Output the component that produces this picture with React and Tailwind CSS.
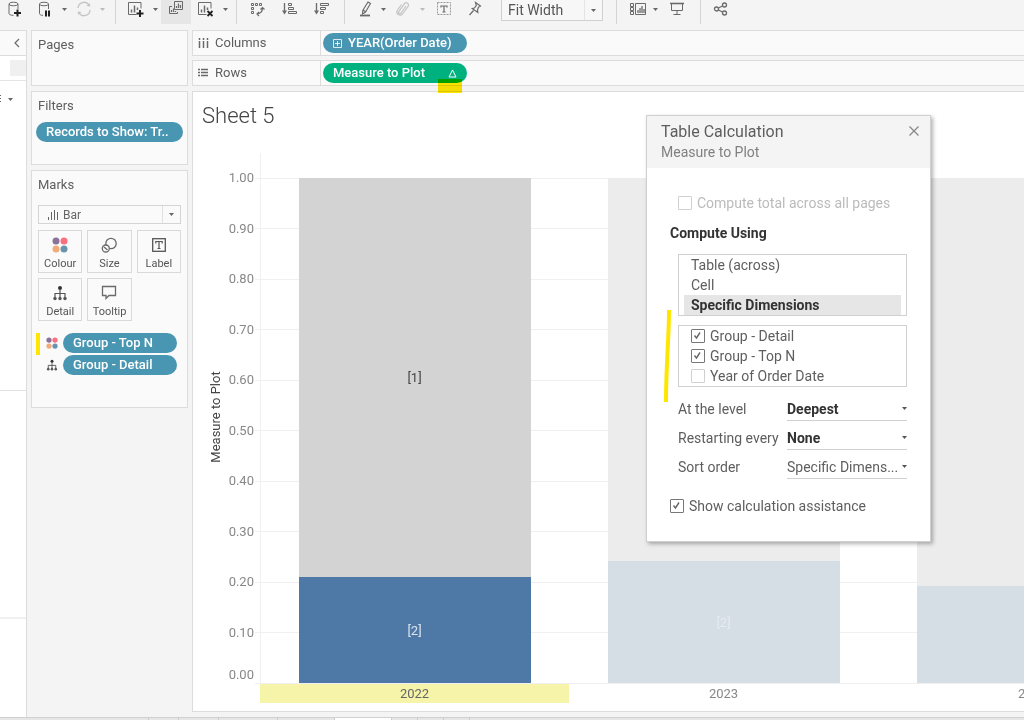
import { useState } from 'react'

const years = [
  { year: '2022', top: 0.21, faded: false },
  { year: '2023', top: 0.242, faded: true },
  { year: '2024', top: 0.192, faded: true, hideLabel: true }
]

const ticks = [0, 1, 2, 3, 4, 5, 6, 7, 8, 9, 10]

// chart geometry
const PLOT_TOP = 86
const PLOT_BOTTOM = 591
const PLOT_LEFT = 66
const COL_WIDTH = 309
const BAR_WIDTH = 232

const Icon = ({ children, width = 18, height = 18, className = 'text-[#6a6a6a]' }) => (
  <svg width={width} height={height} viewBox={`0 0 ${width} ${height}`} fill="none" stroke="currentColor" className={`shrink-0 ${className}`} aria-hidden="true">
    {children}
  </svg>
)

const Caret = ({ className = 'text-[#666]' }) => (
  <svg width="5" height="3" viewBox="0 0 5 3" className={`shrink-0 ${className}`} aria-hidden="true">
    <path d="M0 0h5L2.5 3z" fill="currentColor" />
  </svg>
)

const NewSourceIcon = () => (
  <Icon>
    <ellipse cx="7.500" cy="4" rx="4.500" ry="1.800" />
    <path d="M3 4v9.500c0 1 1.500 1.800 4.500 1.900M12 4v5" />
    <path d="M11.500 9.500v7M8 13h7" stroke="#222" strokeWidth="2" />
  </Icon>
)

const PauseSourceIcon = () => (
  <Icon>
    <ellipse cx="8" cy="4" rx="4.500" ry="1.800" />
    <path d="M3.500 4v9.500c0 1 1 1.700 3.500 1.900M12.500 4v5" />
    <path d="M10 10.500v6M13 10.500v6" stroke="#222" strokeWidth="2" />
  </Icon>
)

const RefreshIcon = () => (
  <Icon className="text-[#c4c4c4]">
    <path d="M3 8a6 6 0 0 1 11-3M15 10a6 6 0 0 1-11 3" strokeWidth="1.300" />
    <path d="M15.500 6.500l-4-.5 3-3zM2.500 11.500l4 .5-3 3z" fill="currentColor" stroke="none" />
  </Icon>
)

const NewSheetIcon = () => (
  <Icon>
    <path d="M9.500 14.500H1.500v-12h12.500v6" />
    <path d="M4.500 12.500V9.500M7.500 12.500V5.500M10.500 10V7.500" strokeWidth="1.500" />
    <path d="M13 10v7M9.500 13.500h7" stroke="#222" strokeWidth="2" />
  </Icon>
)

const DuplicateIcon = () => (
  <Icon>
    <path d="M7.500 1.500h8v8h-8zM5 6.500H2.500v7h8V12" />
    <path d="M9.500 8V6M11.500 8V3.500M13.500 8V5M4.500 12v-2M6.500 12V8.500M8.500 12v-1" strokeWidth="1.200" />
  </Icon>
)

const ClearIcon = () => (
  <Icon>
    <path d="M9.500 14.500H1.500v-12h12.500v6" />
    <path d="M4.500 12.500V9.500M7.500 12.500V5.500M10.500 10V7.500" strokeWidth="1.500" />
    <path d="M10.500 11l5 5M15.500 11l-5 5" stroke="#222" strokeWidth="1.800" />
  </Icon>
)

const SwapIcon = () => (
  <Icon>
    <path d="M2.500 3.500h2v2h-2zM6.500 3.500h2v2h-2zM10.500 3.500h2v2h-2zM2.500 7.500h2v2h-2zM2.500 11.500h2v2h-2z" />
    <path d="M13.500 8c0 4-2 5.500-5.500 6M11.500 9.500l2-2 2 2M10 12l-2 2 2 2" strokeWidth="1.200" />
  </Icon>
)

const SortAscIcon = () => (
  <Icon>
    <path d="M3.500 3v9" strokeWidth="1.300" />
    <path d="M1 10.500h5l-2.500 4z" fill="currentColor" stroke="none" />
    <path d="M7.500 3.500h3v2h-3zM7.500 7.500h5v2h-5zM7.500 11.500h8v2h-8z" />
  </Icon>
)

const SortDescIcon = () => (
  <Icon>
    <path d="M3.500 3v9" strokeWidth="1.300" />
    <path d="M1 10.500h5l-2.500 4z" fill="currentColor" stroke="none" />
    <path d="M7.500 3.500h8v2h-8zM7.500 7.500h5v2h-5zM7.500 11.500h3v2h-3z" />
  </Icon>
)

const HighlightIcon = () => (
  <Icon>
    <path d="M12 2l2.500 1.500-5 8.500-3 2 .3-3.500zM7 10l2.500 1.700" strokeWidth="1.100" />
    <path d="M4 15.500h10" strokeWidth="1.800" />
  </Icon>
)

const ClipIcon = () => (
  <Icon className="text-[#c4c4c4]">
    <path d="M12 6l-5 7a1.300 1.300 0 0 1-2.200-1.400l5.500-7.800a2.300 2.300 0 0 1 3.800 2.600L8.500 14a3.200 3.200 0 0 1-5.300-3.500L7.500 4.500" strokeWidth="1.200" />
  </Icon>
)

const LabelsIcon = () => (
  <Icon>
    <rect x="2.500" y="2.500" width="13" height="12" strokeDasharray="2 1" stroke="#999" />
    <path d="M6 7.500V6h6v1.500M9 6v6M7.500 12h3" strokeWidth="1.200" />
  </Icon>
)

const PinIcon = () => (
  <Icon>
    <path d="M9.500 2.500l5 3.500-1 .8-1 .2-1 3 .3 2.500-5.500-4 2-.5 2-2.500zM7.500 10.500l-4 4.500" strokeWidth="1.200" />
  </Icon>
)

const CardsIcon = () => (
  <Icon>
    <path d="M1.500 3.500h3v3h-3zM1.500 7.500h3v3h-3zM1.500 11.500h3v3h-3zM6.500 3.500h10v11h-10z" />
    <path d="M9 13v-3M11 13V8M13 13V6M15 13V9" strokeWidth="1.300" />
  </Icon>
)

const PresentIcon = () => (
  <Icon>
    <path d="M2 3.500h14" strokeWidth="1.600" />
    <path d="M3.500 4v6.500h11V4M9 10.500v4M5.500 14.500h7" />
  </Icon>
)

const ShareIcon = () => (
  <Icon>
    <circle cx="4.500" cy="9" r="2" strokeWidth="1.300" />
    <circle cx="12.500" cy="5" r="2" strokeWidth="1.300" />
    <circle cx="12.500" cy="13" r="2" strokeWidth="1.300" />
    <path d="M6.500 8l4-2M6.500 10l4 2" strokeWidth="1.200" />
  </Icon>
)

const DotsIcon = ({ size = 16 }) => (
  <svg width={size} height={size} viewBox="0 0 16 16" className="shrink-0" aria-hidden="true">
    <circle cx="4" cy="4" r="3.500" fill="#8a7299" />
    <circle cx="12" cy="4" r="3.500" fill="#fb7080" />
    <circle cx="4" cy="12" r="3.500" fill="#f1ab78" />
    <circle cx="12" cy="12" r="3.500" fill="#6a93ad" />
  </svg>
)

const DetailIcon = ({ size = 16 }) => (
  <svg width={size} height={size} viewBox="0 0 16 16" fill="none" stroke="#555" strokeWidth="1.200" className="shrink-0" aria-hidden="true">
    <circle cx="8" cy="3" r="2" fill="#333" stroke="none" />
    <path d="M8 4v8M3 12V8.500h10V12" />
    <circle cx="3" cy="13.500" r="1.700" fill="#555" stroke="none" />
    <circle cx="8" cy="13.500" r="1.700" fill="#555" stroke="none" />
    <circle cx="13" cy="13.500" r="1.700" fill="#555" stroke="none" />
  </svg>
)

const SizeIcon = () => (
  <Icon width={16} height={16}>
    <circle cx="10" cy="6.500" r="5.200" strokeWidth="1.300" />
    <circle cx="4.800" cy="11.500" r="3.500" fill="#fafafa" strokeWidth="1.300" />
    <path d="M3 10l3.500 3" strokeWidth="1.300" />
  </Icon>
)

const TextIcon = () => (
  <Icon width={16} height={16} className="text-[#555]">
    <rect x="1.700" y="1.700" width="12.600" height="12.600" strokeWidth="1.300" />
    <path d="M4.800 6.500v-2h6.400v2M8 4.500v7M6.500 11.500h3" strokeWidth="1.200" />
  </Icon>
)

const TooltipIcon = () => (
  <Icon width={16} height={16}>
    <path d="M1.500 1.500h13v9H8l-3 3v-3H1.500z" strokeWidth="1.300" />
  </Icon>
)

const toolbarItems = [
  { label: 'New data source', icon: NewSourceIcon, cell: 'w-[30px]' },
  { label: 'Pause auto updates', icon: PauseSourceIcon, cell: 'w-[29px]' },
  { label: 'Update options', caret: true, cell: 'w-[11px]' },
  { label: 'Run update', icon: RefreshIcon, cell: 'w-[27px]' },
  { label: 'Run options', caret: true, muted: true, cell: 'w-[11px]' },
  { divider: true, cell: 'w-[14px]' },
  { label: 'New worksheet', icon: NewSheetIcon, cell: 'w-[28px]' },
  { label: 'New options', caret: true, cell: 'w-[11px]' },
  { label: 'Duplicate', icon: DuplicateIcon, active: true, cell: 'w-[30px]' },
  { label: 'Clear sheet', icon: ClearIcon, cell: 'w-[29px]' },
  { label: 'Clear options', caret: true, cell: 'w-[10px]' },
  { divider: true, cell: 'w-[13px]' },
  { label: 'Swap rows and columns', icon: SwapIcon, cell: 'w-[30px]' },
  { label: 'Sort ascending', icon: SortAscIcon, cell: 'w-[34px]' },
  { label: 'Sort descending', icon: SortDescIcon, cell: 'w-[30px]' },
  { divider: true, cell: 'w-[14px]' },
  { label: 'Highlight', icon: HighlightIcon, cell: 'w-[27px]' },
  { label: 'Highlight options', caret: true, cell: 'w-[10px]' },
  { label: 'Group members', icon: ClipIcon, cell: 'w-[29px]' },
  { label: 'Group options', caret: true, muted: true, cell: 'w-[10px]' },
  { label: 'Show mark labels', icon: LabelsIcon, cell: 'w-[34px]' },
  { label: 'Fix axes', icon: PinIcon, cell: 'w-[28px]' }
]

const toolbarEnd = [
  { divider: true, cell: 'w-[27px]' },
  { label: 'Show cards', icon: CardsIcon, cell: 'w-[16px]' },
  { label: 'Card options', caret: true, cell: 'w-[18px]' },
  { label: 'Presentation mode', icon: PresentIcon, cell: 'w-[26px]' },
  { divider: true, cell: 'w-[20px]' },
  { label: 'Share', icon: ShareIcon, cell: 'w-[22px]' }
]

const ToolbarItem = ({ item }) => {
  if (item.divider) {
    return (
      <div className={`flex h-6 shrink-0 justify-center ${item.cell}`}>
        <div className="h-6 w-px bg-[#d4d4d4]" />
      </div>
    )
  }

  const ItemIcon = item.icon
  return (
    <button aria-label={item.label} className={`flex h-6 shrink-0 justify-center ${item.cell} ${item.active ? 'bg-[#e6e6e6]' : ''} ${item.caret ? 'items-center pb-1.5' : 'items-start'}`}>
      {item.caret ? <Caret className={item.muted ? 'text-[#bbb]' : 'text-[#666]'} /> : <ItemIcon />}
    </button>
  )
}

const Toolbar = () => (
  <header className="flex h-[30px] shrink-0 items-start">
    {toolbarItems.map((item, index) => <ToolbarItem key={index} item={item} />)}
    <div className="ml-3 flex h-[21px] w-[102px] shrink-0 items-center border border-t-0 border-[#d0d0d0] bg-[#f7f7f7]">
      <select aria-label="Fit" className="h-full w-full appearance-none pl-1.5 text-[14px] leading-5 text-[#555] outline-none">
        <option>Fit Width</option>
        <option>Standard</option>
        <option>Entire View</option>
      </select>
      <div className="pointer-events-none -ml-[18px] flex h-full w-[18px] shrink-0 items-center justify-center border-l border-[#e4e4e4]">
        <Caret />
      </div>
    </div>
    {toolbarEnd.map((item, index) => <ToolbarItem key={index} item={item} />)}
  </header>
)

const Pill = ({ children, className = '' }) => (
  <button className={`flex h-5 items-center rounded-full px-[10px] text-left text-[13px] font-medium leading-5 whitespace-nowrap text-white ${className}`}>
    {children}
  </button>
)

const Card = ({ title, className = '', children }) => (
  <section className={`border border-[#dcdcdc] bg-[#fafafa] px-1.5 ${className}`}>
    <h2 className="pt-[5px] text-[13px] leading-[18px] text-[#5e5e5e]">{title}</h2>
    {children}
  </section>
)

const markButtons = [
  { label: 'Colour', icon: DotsIcon },
  { label: 'Size', icon: SizeIcon },
  { label: 'Label', icon: TextIcon },
  { label: 'Detail', icon: DetailIcon },
  { label: 'Tooltip', icon: TooltipIcon }
]

const SideCards = () => (
  <aside className="flex w-[157px] shrink-0 flex-col gap-[5px]">
    <Card title="Pages" className="h-14" />
    <Card title="Filters" className="h-[74px]">
      <Pill className="mt-[7px] -ml-0.5 w-[147px] bg-[#4996b2]">Records to Show: Tr..</Pill>
    </Card>
    <Card title="Marks" className="h-[238px]">
      <div className="mt-[11px] flex h-[19px] items-center border border-[#d4d4d4] bg-[#fafafa]">
        <Icon width={12} height={12} className="ml-2 text-[#666]">
          <path d="M1.500 11V8M4.500 11V3M7.500 11V1M10.500 11V3" />
        </Icon>
        <select aria-label="Mark type" className="h-full min-w-0 flex-1 appearance-none pl-1 text-xs leading-4 text-[#666] outline-none">
          <option>Bar</option>
          <option>Line</option>
          <option>Area</option>
        </select>
        <div className="pointer-events-none -ml-[18px] flex h-full w-[18px] items-center justify-center border-l border-[#e0e0e0]">
          <Caret />
        </div>
      </div>
      <div className="mt-[6px] grid grid-cols-3 gap-[5px]">
        {markButtons.map(({ label, icon: MarkIcon }) => (
          <button key={label} className="flex h-[43px] flex-col items-center border border-[#d9d9d9] bg-[#fafafa] pt-[6px] text-[11px] leading-4 text-[#555]">
            <MarkIcon />
            <span className="pt-[3px]">{label}</span>
          </button>
        ))}
      </div>
      <div className="relative mt-3 flex flex-col gap-0.5">
        <div className="absolute top-0 -left-0.5 h-[22px] w-1 bg-[#ffe600]" />
        <div className="flex items-center pr-1 pl-2">
          <DotsIcon size={12} />
          <Pill className="ml-[5px] flex-1 bg-[#4996b2]">Group - Top N</Pill>
        </div>
        <div className="flex items-center pr-1 pl-2">
          <DetailIcon size={12} />
          <Pill className="ml-[5px] flex-1 bg-[#4996b2]">Group - Detail</Pill>
        </div>
      </div>
    </Card>
  </aside>
)

const ShelfRow = ({ label, icon, children }) => (
  <div className="flex h-[26px] items-center border border-r-0 border-[#dcdcdc] bg-[#fafafa]">
    <div className="flex h-full w-32 shrink-0 items-center gap-1.5 border-r border-[#dcdcdc] pl-1 text-[13px] leading-5 text-[#5e5e5e]">
      {icon}
      {label}
    </div>
    <div className="relative flex pl-0.5">{children}</div>
  </div>
)

const Chart = () => {
  const scale = value => PLOT_BOTTOM - value * (PLOT_BOTTOM - PLOT_TOP)
  const right = PLOT_LEFT + COL_WIDTH * 3

  return (
    <svg width={right} height="619" className="block shrink-0" role="img" aria-label="Measure to Plot by year">
      {ticks.map(tick => (
        <g key={tick}>
          <line x1={PLOT_LEFT - 4} x2={right} y1={scale(tick / 10)} y2={scale(tick / 10)} stroke="#f0f0f0" shapeRendering="crispEdges" />
          <text x={PLOT_LEFT - 5} y={scale(tick / 10) + (tick === 0 ? -4 : 4)} textAnchor="end" fontSize="13" fill="#888">
            {(tick / 10).toFixed(2)}
          </text>
        </g>
      ))}
      <line x1={PLOT_LEFT + 1} x2={PLOT_LEFT + 1} y1="61" y2={PLOT_BOTTOM} stroke="#f0f0f0" shapeRendering="crispEdges" />
      <text transform="translate(27 325) rotate(-90)" textAnchor="middle" fontSize="13" fill="#444">Measure to Plot</text>

      {years.map(({ year, top, faded, hideLabel }, index) => {
        const left = PLOT_LEFT + 1 + COL_WIDTH * index
        const barX = left + (COL_WIDTH - BAR_WIDTH) / 2
        const middle = left + COL_WIDTH / 2
        return (
          <g key={year} shapeRendering="crispEdges">
            <rect x={barX} y={PLOT_TOP} width={BAR_WIDTH} height={scale(top) - PLOT_TOP} fill={faded ? '#ececec' : '#d3d3d3'} />
            <rect x={barX} y={scale(top)} width={BAR_WIDTH} height={PLOT_BOTTOM - scale(top)} fill={faded ? '#d5dde5' : '#4e79a7'} />
            {!faded && <rect x={left} y={PLOT_BOTTOM + 1} width={COL_WIDTH} height="19" fill="#f5f4a9" />}
            {!faded && <text x={middle} y="290" textAnchor="middle" fontSize="13" fill="#444">[1]</text>}
            {!hideLabel && (
              <text x={middle} y={(scale(top) + PLOT_BOTTOM) / 2 + 5} textAnchor="middle" fontSize="13" fill={faded ? '#e6ebf0' : '#dbe4ed'}>[2]</text>
            )}
            <text x={middle} y="606" textAnchor="middle" fontSize="13" fill={faded ? '#888' : '#666'}>{year}</text>
          </g>
        )
      })}
    </svg>
  )
}

const Checkbox = ({ label, className = '', disabled = false, defaultChecked = false }) => {
  const [checked, setChecked] = useState(defaultChecked)

  return (
    <label className={`flex h-5 items-center gap-[5px] text-[14px] leading-5 ${disabled ? 'text-[#bbb]' : 'text-[#5e5e5e]'} ${className}`}>
      <span className="relative flex size-[14px] shrink-0">
        <input
          type="checkbox"
          checked={checked}
          disabled={disabled}
          onChange={e => setChecked(e.target.checked)}
          className="size-[14px] appearance-none rounded-[1px] border border-[#d0d0d0] bg-white checked:border-[#777]"
        />
        {checked && (
          <svg viewBox="0 0 14 14" className="pointer-events-none absolute inset-0" fill="none" stroke="#666" strokeWidth="1.400" aria-hidden="true">
            <path d="M3.500 6.500l2 2.500 3.500-5.500" />
          </svg>
        )}
      </span>
      {label}
    </label>
  )
}

const scopes = ['Table (across)', 'Cell', 'Specific Dimensions']

const Field = ({ id, label, options, strong }) => (
  <div className="flex h-[29px] items-start">
    <label htmlFor={id} className="w-[109px] shrink-0 text-[14px] leading-6 whitespace-nowrap text-[#5e5e5e]">{label}</label>
    <div className="flex h-6 min-w-0 flex-1 items-center border-b border-[#d0d0d0]">
      <select id={id} className={`h-full w-full appearance-none text-[14px] leading-5 outline-none ${strong ? 'font-bold text-[#333]' : 'text-[#5e5e5e]'}`}>
        {options.map(option => <option key={option}>{option}</option>)}
      </select>
      <Caret className="pointer-events-none -ml-[5px] text-[#555]" />
    </div>
  </div>
)

const TableCalculation = () => {
  const [scope, setScope] = useState('Specific Dimensions')

  return (
    <div role="dialog" aria-label="Table Calculation" className="absolute top-[23px] left-[453px] w-[285px] border border-[#d0d0d0] bg-white pb-[25px] shadow-[2px_2px_4px_rgba(0,0,0,0.3)]">
      <div className="flex h-[52px] items-start justify-between bg-[#f4f4f4] pt-[5px] pr-2 pl-[14px]">
        <div>
          <h2 className="text-[16px] leading-[22px] text-[#5e5e5e]">Table Calculation</h2>
          <p className="text-[14px] leading-[18px] text-[#808080]">Measure to Plot</p>
        </div>
        <button aria-label="Close" className="p-0.5">
          <Icon width={12} height={14} className="text-[#888]">
            <path d="M1.500 3.500l9 9M10.500 3.500l-9 9" strokeWidth="1.300" />
          </Icon>
        </button>
      </div>
      <div className="px-[23px] pt-[25px]">
        <Checkbox label="Compute total across all pages" disabled className="ml-2" />
        <h3 className="mt-[10px] text-[14px] leading-5 font-bold text-[#333]">Compute Using</h3>
        <div className="ml-2">
          <div role="listbox" aria-label="Compute using" className="mt-[11px] border border-[#d0d0d0] px-[5px]">
            {scopes.map(item => (
              <button
                key={item}
                role="option"
                aria-selected={scope === item}
                onClick={() => setScope(item)}
                className={`block h-5 w-full pl-[7px] text-left text-[14px] leading-5 ${scope === item ? 'bg-[#e6e6e6] font-bold text-[#333]' : 'text-[#5e5e5e]'}`}
              >
                {item}
              </button>
            ))}
          </div>
          <div className="mt-[9px] border border-[#d0d0d0] pl-3">
            <Checkbox label="Group - Detail" defaultChecked />
            <Checkbox label="Group - Top N" defaultChecked />
            <Checkbox label="Year of Order Date" />
          </div>
          <div className="mt-[10px]">
            <Field id="level" label="At the level" options={['Deepest', 'Group - Detail', 'Group - Top N']} strong />
            <Field id="restart" label="Restarting every" options={['None', 'Group - Detail']} strong />
            <Field id="sort" label="Sort order" options={['Specific Dimens...', 'Custom']} />
          </div>
        </div>
        <Checkbox label="Show calculation assistance" defaultChecked className="mt-3" />
      </div>
      <svg width="8" height="94" viewBox="0 0 8 94" className="pointer-events-none absolute top-[193px] left-[16px]" fill="none" aria-hidden="true">
        <path d="M6 1C6 30 3 55 3 93" stroke="#ffe600" strokeWidth="4" />
      </svg>
    </div>
  )
}

const DataPaneEdge = () => (
  <div className="flex w-[27px] shrink-0 flex-col border-r border-[#dcdcdc] bg-white">
    <button aria-label="Collapse data pane" className="flex h-[26px] items-center justify-end border-y border-[#dcdcdc] bg-[#fafafa] pr-1.5">
      <Icon width={6} height={10}>
        <path d="M5 1L1 5l4 4" strokeWidth="1.200" />
      </Icon>
    </button>
    <div className="flex h-[25px] items-center justify-end border-b border-[#e4e4e4]">
      <div className="h-4 w-4 bg-[#f0f0f0]" />
    </div>
    <div className="flex h-9 items-center gap-1.5 text-[#666]">
      <svg width="2" height="8" viewBox="0 0 2 8" aria-hidden="true">
        <path d="M0 0h1v1H0zM0 3h1v1H0zM0 6h1v1H0z" fill="currentColor" />
      </svg>
      <Caret />
    </div>
    <div className="h-[274px] border-b border-[#e0e0e0]" />
    <div className="h-[228px] border-b-2 border-[#f0f0f0]" />
  </div>
)

const sheetTabs = ['w-[149px]', 'w-[30px]', 'w-10', 'w-[59px]', 'w-[57px]', 'w-[57px] bg-white', 'w-[26px]', 'w-[26px]', 'w-[26px]']

const App = () => (
  <div className="flex h-screen min-h-[720px] flex-col overflow-hidden bg-[#f4f4f4] font-['Roboto','Open_Sans',sans-serif]">
    <Toolbar />
    <div className="flex min-h-0 flex-1">
      <DataPaneEdge />
      <div className="flex min-w-0 flex-1 pl-1">
        <SideCards />
        <main className="ml-1 flex min-w-0 flex-1 flex-col">
          <ShelfRow
            label="Columns"
            icon={
              <Icon width={12} height={12}>
                <path d="M2.500 1v2M2.500 4v7M6.500 1v2M6.500 4v7M10.500 1v2M10.500 4v7" strokeWidth="1.500" />
              </Icon>
            }
          >
            <Pill className="w-36 gap-1.5 bg-[#4996b2]">
              <Icon width={9} height={9} className="text-white">
                <path d="M.5.5h8v8h-8zM4.500 2v5M2 4.500h5" strokeWidth=".8" />
              </Icon>
              YEAR(Order Date)
            </Pill>
          </ShelfRow>
          <div className="mt-1">
            <ShelfRow
              label="Rows"
              icon={
                <Icon width={12} height={12}>
                  <path d="M1 2.500h2M4 2.500h7M1 5.500h2M4 5.500h7M1 8.500h2M4 8.500h7" strokeWidth="1.500" />
                </Icon>
              }
            >
              <Pill className="w-36 justify-between bg-[#00b180]">
                Measure to Plot
                <Icon width={9} height={9} className="text-white">
                  <path d="M4.500 1L8 8H1z" />
                </Icon>
              </Pill>
              <div className="absolute top-4 left-[117px] z-10 h-[14px] w-6 bg-[#ffe600] mix-blend-multiply" />
            </ShelfRow>
          </div>
          <section className="relative mt-[5px] h-[621px] border border-r-0 border-[#dcdcdc] bg-white">
            <div className="h-[619px] overflow-hidden">
              <h1 className="-mb-12 pt-[9px] pb-[9px] pl-[9px] text-[22px] leading-[30px] font-light text-[#444]">Sheet 5</h1>
              <Chart />
            </div>
            <TableCalculation />
          </section>
        </main>
      </div>
    </div>
    <footer className="flex h-[3px] shrink-0 border-t border-[#d0d0d0] bg-[#e6e6e6]">
      {sheetTabs.map((tab, index) => <div key={index} className={`shrink-0 border-r border-[#ccc] ${tab}`} />)}
    </footer>
  </div>
)

export default App
